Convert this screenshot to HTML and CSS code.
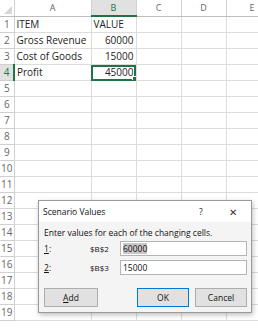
FILE: index.html
```html
<!DOCTYPE html>
<html lang="en">
<head>
    <meta charset="UTF-8">
    <meta name="viewport" content="width=device-width, initial-scale=1.0">
    <title>Scenario Values</title>
    <link rel="stylesheet" href="styles.css">
</head>
<body>
<div class="sheet">
    <table class="grid">
        <colgroup>
            <col class="c-head"><col class="c-a"><col class="c-b"><col class="c-c"><col class="c-d"><col class="c-e">
        </colgroup>
        <tr class="col-heads">
            <th class="corner"><span class="tri"></span></th>
            <th>A</th><th class="sel-col">B</th><th>C</th><th>D</th><th>E</th>
        </tr>
        <tr><th>1</th><td>ITEM</td><td>VALUE</td><td></td><td></td><td></td></tr>
        <tr><th>2</th><td>Gross Revenue</td><td class="num">60000</td><td></td><td></td><td></td></tr>
        <tr><th>3</th><td>Cost of Goods</td><td class="num">15000</td><td></td><td></td><td></td></tr>
        <tr><th class="sel-row">4</th><td>Profit</td><td class="num active">45000<span class="handle"></span></td><td></td><td></td><td></td></tr>
        <tr><th>5</th><td></td><td></td><td></td><td></td><td></td></tr>
        <tr><th>6</th><td></td><td></td><td></td><td></td><td></td></tr>
        <tr><th>7</th><td></td><td></td><td></td><td></td><td></td></tr>
        <tr><th>8</th><td></td><td></td><td></td><td></td><td></td></tr>
        <tr><th>9</th><td></td><td></td><td></td><td></td><td></td></tr>
        <tr><th>10</th><td></td><td></td><td></td><td></td><td></td></tr>
        <tr><th>11</th><td></td><td></td><td></td><td></td><td></td></tr>
        <tr><th>12</th><td></td><td></td><td></td><td></td><td></td></tr>
        <tr><th>13</th><td></td><td></td><td></td><td></td><td></td></tr>
        <tr><th>14</th><td></td><td></td><td></td><td></td><td></td></tr>
        <tr><th>15</th><td></td><td></td><td></td><td></td><td></td></tr>
        <tr><th>16</th><td></td><td></td><td></td><td></td><td></td></tr>
        <tr><th>17</th><td></td><td></td><td></td><td></td><td></td></tr>
        <tr><th>18</th><td></td><td></td><td></td><td></td><td></td></tr>
        <tr><th>19</th><td></td><td></td><td></td><td></td><td></td></tr>
    </table>

    <div class="dialog">
        <div class="title-bar">
            <span class="title">Scenario Values</span>
            <span class="help">?</span>
            <span class="close">&#x2715;</span>
        </div>
        <div class="dialog-body">
            <p class="hint">Enter values for each of the changing cells.</p>
            <div class="field">
                <span class="idx"><u>1</u>:</span>
                <span class="ref">$B$2</span>
                <span class="box"><span class="picked">60000</span></span>
            </div>
            <div class="field">
                <span class="idx"><u>2</u>:</span>
                <span class="ref">$B$3</span>
                <span class="box">15000</span>
            </div>
            <div class="buttons">
                <button class="btn add"><u>A</u>dd</button>
                <div class="right">
                    <button class="btn ok">OK</button>
                    <button class="btn">Cancel</button>
                </div>
            </div>
        </div>
    </div>
</div>
</body>
</html>
```

FILE: styles.css
```css
body {
    margin: 0;
    background: #fff;
    font-family: "Open Sans", "Liberation Sans", sans-serif;
}
.sheet {
    position: relative;
    width: 258px;
    height: 330px;
    overflow: hidden;
}
.grid {
    border-collapse: collapse;
    table-layout: fixed;
    width: 278px;
    font-size: 10px;
    color: #222;
}
.c-head { width: 14px; }
.c-a { width: 77px; }
.c-b, .c-c, .c-d { width: 45px; }
.c-e { width: 52px; }
.grid tr { height: 16px; }
.grid td {
    border-right: 1px solid #dcdcdc;
    border-bottom: 1px solid #dcdcdc;
    padding: 0 2px;
    white-space: nowrap;
    overflow: hidden;
    line-height: 15px;
}
.grid th {
    font-weight: normal;
    color: #666;
    background: #fff;
    border-right: 1px solid #d0d0d0;
    border-bottom: 1px solid #d0d0d0;
    padding: 0;
    line-height: 15px;
}
.col-heads th {
    font-size: 9px;
    border-bottom: 1px solid #bdbdbd;
}
.corner { position: relative; }
.tri {
    position: absolute;
    right: 2px;
    bottom: 2px;
    border-left: 8px solid transparent;
    border-bottom: 8px solid #d6d6d6;
}
.sel-col {
    background: #e1e1e1 !important;
    color: #217346 !important;
    border-bottom: 2px solid #217346 !important;
}
.sel-row {
    background: #e1e1e1 !important;
    color: #217346 !important;
    border-right: 2px solid #217346 !important;
}
.num { text-align: right; }
.active {
    position: relative;
    outline: 2px solid #217346;
    outline-offset: -2px;
}
.handle {
    position: absolute;
    right: -2px;
    bottom: -2px;
    width: 4px;
    height: 4px;
    background: #217346;
    border: 1px solid #fff;
}

.dialog {
    position: absolute;
    left: 38px;
    top: 200px;
    width: 214px;
    height: 113px;
    box-sizing: border-box;
    border: 1px solid #9a9a9a;
    background: #f4f4f4;
    box-shadow: 1px 2px 5px rgba(0, 0, 0, 0.25);
    font-size: 8.5px;
    color: #111;
    display: flex;
    flex-direction: column;
}
.title-bar {
    height: 21px;
    background: #fff;
    display: flex;
    align-items: center;
    padding-left: 4px;
}
.title { flex: 1; }
.help { width: 30px; }
.close {
    width: 22px;
    font-size: 10px;
    color: #333;
}
.dialog-body {
    flex: 1;
    padding: 5px 4px 5px 5px;
    display: flex;
    flex-direction: column;
}
.hint { margin: 0 0 3px; }
.field {
    display: flex;
    align-items: center;
    height: 15px;
    margin-bottom: 4px;
}
.idx { width: 46px; }
.ref { width: 30px; font-size: 8px; }
.box {
    flex: 1;
    height: 15px;
    box-sizing: border-box;
    border: 1px solid #b4b4b4;
    background: #fff;
    padding: 0 2px;
    line-height: 13px;
}
.picked { background: #c8c8c8; }
.buttons {
    margin-top: auto;
    display: flex;
    justify-content: space-between;
}
.right { display: flex; gap: 6px; }
.btn {
    width: 54px;
    height: 19px;
    font-family: inherit;
    font-size: 8.5px;
    color: #111;
    background: #e1e1e1;
    border: 1px solid #adadad;
    padding: 0;
}
.ok {
    width: 52px;
    border: 1px solid #0078d7;
}
.right .btn { width: 52px; }
```
